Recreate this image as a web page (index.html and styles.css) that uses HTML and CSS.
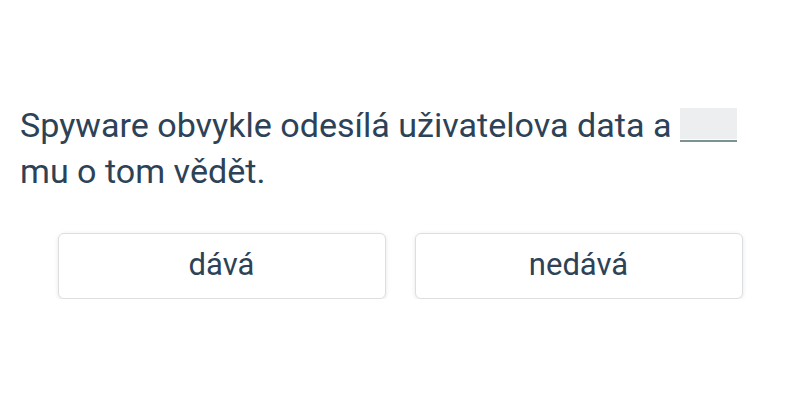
FILE: index.html
```html
<!DOCTYPE html>
<html lang="cs">
<head>
<meta charset="utf-8">
<link rel="stylesheet" href="styles.css">
</head>
<body>
<main class="quiz">
  <p class="question">Spyware obvykle odesílá uživatelova data a <span class="blank"></span> mu o tom vědět.</p>
  <div class="options">
    <button class="option">dává</button>
    <button class="option">nedává</button>
  </div>
</main>
</body>
</html>
```
FILE: styles.css
```css
html, body {
  margin: 0;
  padding: 0;
  background: #ffffff;
}
body {
  font-family: Roboto, "Noto Sans", sans-serif;
  color: #2d4257;
}
.quiz {
  padding: 102px 20px 0 20px;
}
.question {
  margin: 0;
  font-size: 34.1px;
  line-height: 46px;
}
.blank {
  display: inline-block;
  width: 57px;
  height: 31px;
  padding-bottom: 1px;
  background: #edeef0;
  background-clip: content-box;
  border-bottom: 2px solid #7d9393;
  vertical-align: -5px;
}
.options {
  display: flex;
  justify-content: center;
  gap: 29px;
  margin-top: 39px;
}
.option {
  width: 328px;
  height: 66px;
  padding: 0 0 4px 0;
  background: #ffffff;
  border: 1px solid #dcdfe2;
  border-radius: 6px;
  box-shadow: 0 1px 4px rgba(0, 0, 0, 0.1);
  font-family: Roboto, "Noto Sans", sans-serif;
  font-size: 31px;
  color: #2d4257;
  cursor: pointer;
}
```
